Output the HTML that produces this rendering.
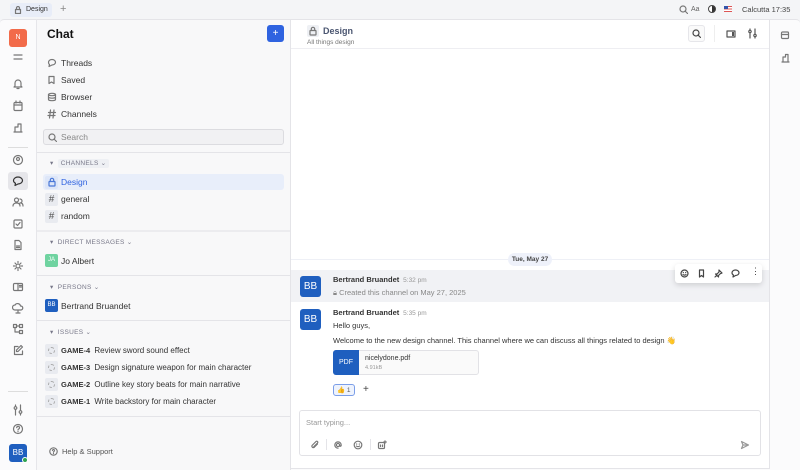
<!DOCTYPE html>
<html><head><meta charset="utf-8"><style>
*{box-sizing:border-box;margin:0;padding:0}
body{width:800px;height:470px;overflow:hidden;background:#f4f5f7;font-family:"Liberation Sans",sans-serif;color:#333;position:relative;font-size:8px}
.a{position:absolute}
svg{position:absolute;fill:none;stroke:#777;stroke-width:1.2;stroke-linecap:round;stroke-linejoin:round}
.it{position:absolute;left:47px;font-size:8.5px;color:#333}
.hd{position:absolute;left:50px;font-size:6.5px;color:#778;letter-spacing:.3px}
.div{position:absolute;left:37px;width:253px;height:1px;background:#e4e4e8}
.sq{position:absolute;left:45px;width:13px;height:13px;background:#e9ebf0;border-radius:2px}
.iss{position:absolute;left:61px;font-size:8px;color:#333}
.iss b{font-size:7.5px;color:#333;margin-right:2px}
</style></head><body>
<div class="a" style="left:10px;top:3px;width:42px;height:14px;background:#e8edf8;border-radius:3px;font-size:7px;padding:3px 0 0 16px;color:#333">Design</div>
<svg style="left:14px;top:6px" width="8" height="8" viewBox="0 0 8 8"><rect x="1.5" y="3.5" width="5" height="4"/><path d="M2.5 3.5V2a1.5 1.5 0 013 0v1.5"/></svg>
<div class="a" style="left:60px;top:3px;font-size:11px;color:#888">+</div>
<svg style="left:679px;top:5px" width="9" height="9" viewBox="0 0 9 9"><circle cx="4" cy="4" r="3"/><path d="M6 6l2.5 2.5"/></svg>
<div class="a" style="left:691px;top:6px;font-size:7px;color:#666">Aa</div>
<div class="a" style="left:708px;top:5px;width:8px;height:8px;border-radius:50%;border:1px solid #444;background:linear-gradient(90deg,#fff 50%,#333 50%)"></div>
<div class="a" style="left:724px;top:6px;width:8px;height:6px;background:linear-gradient(#d55 0 20%,#fff 20% 40%,#d55 40% 60%,#fff 60% 80%,#d55 80%)"><div style="width:4px;height:3px;background:#35a"></div></div>
<div class="a" style="left:742px;top:5px;font-size:7.5px;color:#444">Calcutta 17:35</div>
<div class="a" style="left:0;top:19px;width:800px;height:451px;background:#fbfbfc;border-top:1px solid #e4e4e8;border-radius:4px 4px 0 0"></div>
<div class="a" style="left:36px;top:19px;width:1px;height:451px;background:#e6e6ea"></div>
<div class="a" style="left:37px;top:20px;width:253px;height:450px;background:#f8f8f9"></div>
<div class="a" style="left:290px;top:20px;width:1px;height:450px;background:#e4e4e8"></div>
<div class="a" style="left:291px;top:20px;width:479px;height:449px;background:#fff;border-right:1px solid #e4e4e8;border-bottom:1px solid #e4e4e8"></div>
<div class="a" style="left:9px;top:29px;width:18px;height:18px;background:#f26b4a;border-radius:3px;color:#fff;font-size:7px;text-align:center;line-height:18px">N</div>
<svg style="left:12px;top:52px" width="12" height="10" viewBox="0 0 12 10"><path d="M2 3h8M2 7h8"/></svg>
<svg style="left:12px;top:78px" width="12" height="12" viewBox="0 0 12 12"><path d="M3 8V5a3 3 0 016 0v3l1 1H2zM5 10.5h2"/></svg>
<svg style="left:12px;top:100px" width="12" height="12" viewBox="0 0 12 12"><rect x="2" y="2.5" width="8" height="8" rx="1"/><path d="M2 5h8M4 1v2M8 1v2"/></svg>
<svg style="left:12px;top:122px" width="12" height="12" viewBox="0 0 12 12"><path d="M3 10V5h3V2h3v8zM2 10h8"/></svg>
<div class="a" style="left:8px;top:147px;width:20px;height:1px;background:#ddd"></div>
<svg style="left:12px;top:154px" width="12" height="12" viewBox="0 0 12 12"><circle cx="6" cy="6" r="4.5"/><circle cx="6" cy="5" r="1.5"/></svg>
<div class="a" style="left:8px;top:172px;width:20px;height:18px;background:#e6e6ea;border-radius:3px"></div>
<svg style="left:12px;top:175px" width="12" height="12" viewBox="0 0 12 12"><path d="M6 2c2.5 0 4.5 1.6 4.5 3.5S8.5 9 6 9L3 10.5 3.5 8.3C2.2 7.6 1.5 6.6 1.5 5.5 1.5 3.6 3.5 2 6 2z" stroke="#333"/></svg>
<svg style="left:12px;top:196px" width="12" height="12" viewBox="0 0 12 12"><circle cx="4.5" cy="4" r="2"/><path d="M1 10c0-2 1.5-3 3.5-3s3.5 1 3.5 3M8 3a2 2 0 010 4M9 7c1.5.3 2 1.5 2 3"/></svg>
<svg style="left:12px;top:218px" width="12" height="12" viewBox="0 0 12 12"><rect x="2" y="2" width="8" height="8" rx="1"/><path d="M4 6l1.5 1.5L8 4.5"/></svg>
<svg style="left:12px;top:239px" width="12" height="12" viewBox="0 0 12 12"><path d="M3 1.5h4l2 2v7H3zM4.5 7h3M4.5 8.5h3"/></svg>
<svg style="left:12px;top:260px" width="12" height="12" viewBox="0 0 12 12"><circle cx="6" cy="6" r="2"/><path d="M6 1.5v1M6 9.5v1M1.5 6h1M9.5 6h1M3 3l.7.7M8.3 8.3l.7.7M3 9l.7-.7M8.3 3.7L9 3"/></svg>
<svg style="left:12px;top:281px" width="12" height="12" viewBox="0 0 12 12"><rect x="1.5" y="2.5" width="9" height="7" rx="1"/><path d="M6 2.5v7M7.5 4.5h2M7.5 6h2"/></svg>
<svg style="left:12px;top:302px" width="12" height="12" viewBox="0 0 12 12"><path d="M3 8a2.5 2.5 0 010-5 3 3 0 015.5 1A2 2 0 019 8zM6 8v3M4 11h4"/></svg>
<svg style="left:12px;top:323px" width="12" height="12" viewBox="0 0 12 12"><rect x="1.5" y="1.5" width="3" height="3"/><rect x="7.5" y="1.5" width="3" height="3"/><rect x="7.5" y="7.5" width="3" height="3"/><path d="M4.5 3h3M3 4.5V9h4.5"/></svg>
<svg style="left:12px;top:344px" width="12" height="12" viewBox="0 0 12 12"><path d="M6 2.5H2.5v8h8V7M9 1.5l1.5 1.5L6 7.5H4.5V6z"/></svg>
<div class="a" style="left:8px;top:391px;width:20px;height:1px;background:#ddd"></div>
<svg style="left:12px;top:404px" width="12" height="12" viewBox="0 0 12 12"><path d="M3.5 1v10M8.5 1v10"/><circle cx="3.5" cy="4" r="1.3" fill="#fff"/><circle cx="8.5" cy="8" r="1.3" fill="#fff"/></svg>
<svg style="left:12px;top:423px" width="12" height="12" viewBox="0 0 12 12"><circle cx="6" cy="6" r="4.5"/><path d="M4.7 4.7a1.4 1.4 0 112 1.3c-.5.3-.7.5-.7 1M6 8.5v.1"/></svg>
<div class="a" style="left:9px;top:444px;width:18px;height:18px;background:#1f5fbf;border-radius:3px;color:#fff;font-size:8px;text-align:center;line-height:18px">BB</div>
<div class="a" style="left:22px;top:457px;width:6px;height:6px;background:#2ea44f;border-radius:50%;border:1px solid #fff"></div>
<div class="a" style="left:47px;top:27px;font-size:12px;font-weight:bold;color:#111">Chat</div>
<div class="a" style="left:267px;top:25px;width:17px;height:17px;background:#2f63e0;border-radius:3px;color:#fff;text-align:center;font-size:10px;line-height:17px">+</div>
<svg style="left:47px;top:58px" width="10" height="10" viewBox="0 0 10 10"><path d="M5 1.5c2 0 3.5 1.3 3.5 2.8S7 7 5 7L2 8.5l.5-2C1.8 6 1.5 5 1.5 4.3 1.5 2.8 3 1.5 5 1.5z"/></svg>
<div class="it" style="left:61px;top:58px">Threads</div>
<svg style="left:47px;top:75px" width="10" height="10" viewBox="0 0 10 10"><path d="M2 1.5h5v7L4.5 7 2 8.5z"/></svg>
<div class="it" style="left:61px;top:75px">Saved</div>
<svg style="left:47px;top:92px" width="10" height="10" viewBox="0 0 10 10"><ellipse cx="5" cy="2.5" rx="3.5" ry="1.2"/><path d="M1.5 2.5v5c0 .7 1.6 1.2 3.5 1.2S8.5 8.2 8.5 7.5v-5M1.5 5c0 .7 1.6 1.2 3.5 1.2S8.5 5.7 8.5 5"/></svg>
<div class="it" style="left:61px;top:92px">Browser</div>
<svg style="left:47px;top:109px" width="10" height="10" viewBox="0 0 10 10"><path d="M3.5 1l-1 8M7 1l-1 8M1.5 3.5h7M1 6.5h7"/></svg>
<div class="it" style="left:61px;top:109px">Channels</div>
<div class="a" style="left:43px;top:129px;width:241px;height:16px;background:#f1f1f3;border:1px solid #dcdce0;border-radius:3px"></div>
<svg style="left:48px;top:133px" width="9" height="9" viewBox="0 0 9 9"><circle cx="4" cy="4" r="3"/><path d="M6 6l2.5 2.5"/></svg>
<div class="a" style="left:61px;top:132px;font-size:8.5px;color:#888">Search</div>
<div class="div" style="top:152px"></div>
<div class="hd" style="top:159px">▾ &nbsp;<span style="background:#eef0f4;padding:1px 3px;border-radius:2px">CHANNELS ⌄</span></div>
<div class="a" style="left:43px;top:174px;width:241px;height:16px;background:#e8eefa;border-radius:3px"></div>
<div class="sq" style="top:175.5px;background:#dde6f8"></div>
<svg style="left:47px;top:177px" width="10" height="10" viewBox="0 0 10 10"><rect x="2" y="4.5" width="6" height="4.5" rx=".5" stroke="#4a78d8"/><path d="M3.3 4.5V3a1.7 1.7 0 013.4 0v1.5" stroke="#4a78d8"/></svg>
<div class="it" style="left:61px;top:177px;color:#2f63e0">Design</div>
<div class="sq" style="top:192.5px;font-size:10px;text-align:center;line-height:13px;color:#555">#</div>
<div class="it" style="left:61px;top:194px">general</div>
<div class="sq" style="top:209.5px;font-size:10px;text-align:center;line-height:13px;color:#555">#</div>
<div class="it" style="left:61px;top:211px">random</div>
<div class="div" style="top:230px;height:2px;background:#ececef"></div>
<div class="hd" style="top:238px">▾ &nbsp;DIRECT MESSAGES ⌄</div>
<div class="a" style="left:45px;top:254px;width:13px;height:13px;background:#6fd3a0;border-radius:2px;color:#fff;font-size:6px;text-align:center;line-height:13px">JA</div>
<div class="it" style="left:61px;top:256px">Jo Albert</div>
<div class="div" style="top:275px"></div>
<div class="hd" style="top:283px">▾ &nbsp;PERSONS ⌄</div>
<div class="a" style="left:45px;top:299px;width:13px;height:13px;background:#1f5fbf;border-radius:2px;color:#fff;font-size:6px;text-align:center;line-height:13px">BB</div>
<div class="it" style="left:61px;top:301px">Bertrand Bruandet</div>
<div class="div" style="top:320px"></div>
<div class="hd" style="top:328px">▾ &nbsp;ISSUES ⌄</div>
<div class="sq" style="top:344px"></div><div class="a" style="left:48px;top:347px;width:7px;height:7px;border:1px dashed #aaa;border-radius:50%"></div>
<div class="iss" style="top:346px"><b>GAME-4</b> Review sword sound effect</div>
<div class="sq" style="top:361px"></div><div class="a" style="left:48px;top:364px;width:7px;height:7px;border:1px dashed #aaa;border-radius:50%"></div>
<div class="iss" style="top:363px"><b>GAME-3</b> Design signature weapon for main character</div>
<div class="sq" style="top:378px"></div><div class="a" style="left:48px;top:381px;width:7px;height:7px;border:1px dashed #aaa;border-radius:50%"></div>
<div class="iss" style="top:380px"><b>GAME-2</b> Outline key story beats for main narrative</div>
<div class="sq" style="top:395px"></div><div class="a" style="left:48px;top:398px;width:7px;height:7px;border:1px dashed #aaa;border-radius:50%"></div>
<div class="iss" style="top:397px"><b>GAME-1</b> Write backstory for main character</div>
<div class="div" style="top:416px"></div>
<svg style="left:49px;top:447px" width="9" height="9" viewBox="0 0 9 9"><circle cx="4.5" cy="4.5" r="3.7"/><path d="M3.5 3.5a1 1 0 111.5.9c-.4.2-.5.4-.5.8M4.5 6.5v.1"/></svg>
<div class="a" style="left:62px;top:447px;font-size:7.5px;color:#555">Help &amp; Support</div>
<div class="a" style="left:307px;top:25px;width:12px;height:12px;background:#eef0f4;border-radius:2px"></div>
<svg style="left:308px;top:26px" width="10" height="10" viewBox="0 0 10 10"><rect x="2" y="4.5" width="6" height="4.5" rx=".5"/><path d="M3.3 4.5V3a1.7 1.7 0 013.4 0v1.5"/></svg>
<div class="a" style="left:323px;top:26px;font-size:9px;font-weight:bold;color:#4a5570">Design</div>
<div class="a" style="left:307px;top:39px;font-size:6.5px;color:#777">All things design</div>
<div class="a" style="left:688px;top:25px;width:17px;height:17px;border:1px solid #e6e6ea;border-radius:3px;background:#fafafa"></div>
<svg style="left:692px;top:29px" width="9" height="9" viewBox="0 0 9 9"><circle cx="4" cy="4" r="3" stroke="#444"/><path d="M6 6l2.5 2.5" stroke="#444"/></svg>
<div class="a" style="left:714px;top:25px;width:1px;height:17px;background:#eee"></div>
<svg style="left:726px;top:29px" width="10" height="10" viewBox="0 0 10 10"><rect x="1" y="2" width="8" height="6" stroke="#555"/><rect x="6" y="3" width="2" height="4" fill="#555" stroke="none"/></svg>
<svg style="left:747px;top:28px" width="11" height="11" viewBox="0 0 11 11"><path d="M3 1v9M8 1v9" stroke="#555"/><circle cx="3" cy="3.5" r="1.2" fill="#fff" stroke="#555"/><circle cx="8" cy="7.5" r="1.2" fill="#fff" stroke="#555"/></svg>
<div class="a" style="left:291px;top:48px;width:478px;height:1px;background:#eeeef2"></div>
<svg style="left:780px;top:30px" width="10" height="10" viewBox="0 0 10 10"><rect x="1.5" y="2" width="7" height="6.5" rx="1"/><path d="M1.5 4.5h7"/></svg>
<svg style="left:780px;top:53px" width="10" height="10" viewBox="0 0 10 10"><path d="M3 9V4h2.5V1.5H8V9zM2 9h7"/></svg>
<div class="a" style="left:291px;top:259px;width:478px;height:1px;background:#eef0f6"></div>
<div class="a" style="left:508px;top:253px;width:44px;height:13px;background:#eef1fa;border-radius:7px;font-size:6.5px;font-weight:bold;color:#444;text-align:center;line-height:13px">Tue, May 27</div>
<div class="a" style="left:291px;top:270px;width:478px;height:32px;background:#f1f2f5"></div>
<div class="a" style="left:300px;top:276px;width:21px;height:21px;background:#1f5fbf;border-radius:3px;color:#fff;font-size:10px;text-align:center;line-height:21px">BB</div>
<div class="a" style="left:333px;top:275px;font-size:7.5px;font-weight:bold;color:#333">Bertrand Bruandet <span style="font-weight:normal;color:#999;font-size:6.5px">&nbsp;5:32 pm</span></div>
<div class="a" style="left:333px;top:288px;font-size:7.5px;color:#888">🔒︎ Created this channel on May 27, 2025</div>
<div class="a" style="left:675px;top:264px;width:87px;height:19px;background:#fff;border-radius:3px;box-shadow:0 2px 6px rgba(0,0,0,.15)"></div>
<svg style="left:680px;top:269px" width="9" height="9" viewBox="0 0 9 9"><circle cx="4.5" cy="4.5" r="3.5" stroke="#444"/><path d="M3 5.5c.8.8 2.2.8 3 0M3.3 3.5v.1M5.7 3.5v.1" stroke="#444"/></svg>
<svg style="left:697px;top:269px" width="9" height="9" viewBox="0 0 9 9"><path d="M2.5 1h4v7L4.5 6.5 2.5 8z" stroke="#444"/></svg>
<svg style="left:714px;top:269px" width="9" height="9" viewBox="0 0 9 9"><path d="M5 1l3 3-1.5.5-2 2 0 1.5L1.5 5h1.5l2-2zM3 6L1 8" stroke="#444"/></svg>
<svg style="left:731px;top:269px" width="9" height="9" viewBox="0 0 9 9"><path d="M4.5 1c2 0 3.5 1.3 3.5 2.8S6.5 6.5 4.5 6.5L2 8l.4-2C1.5 5.5 1 4.7 1 3.8 1 2.3 2.5 1 4.5 1z" stroke="#444"/></svg>
<div class="a" style="left:751px;top:266px;font-size:9px;color:#444">⋮</div>
<div class="a" style="left:300px;top:309px;width:21px;height:21px;background:#1f5fbf;border-radius:3px;color:#fff;font-size:10px;text-align:center;line-height:21px">BB</div>
<div class="a" style="left:333px;top:308px;font-size:7.5px;font-weight:bold;color:#333">Bertrand Bruandet <span style="font-weight:normal;color:#999;font-size:6.5px">&nbsp;5:35 pm</span></div>
<div class="a" style="left:333px;top:321px;font-size:7.5px;color:#333">Hello guys,</div>
<div class="a" style="left:333px;top:336px;font-size:7.5px;color:#333;white-space:nowrap">Welcome to the new design channel. This channel where we can discuss all things related to design 👋</div>
<div class="a" style="left:333px;top:350px;width:146px;height:25px;border:1px solid #e2e2e6;border-radius:3px;background:#fafafa"></div>
<div class="a" style="left:333px;top:350px;width:26px;height:25px;background:#1f5fbf;border-radius:3px 0 0 3px;color:#fff;font-size:7px;text-align:center;line-height:25px">PDF</div>
<div class="a" style="left:365px;top:355px;font-size:7px;color:#333">nicelydone.pdf</div>
<div class="a" style="left:365px;top:365px;font-size:5.5px;color:#999">4.91kB</div>
<div class="a" style="left:333px;top:384px;width:22px;height:12px;background:#eef3fd;border:1px solid #7b9ee8;border-radius:3px;font-size:6.5px;color:#555;padding:1px 0 0 3px">👍 1</div>
<div class="a" style="left:363px;top:384px;font-size:10px;color:#444">+</div>
<div class="a" style="left:299px;top:410px;width:462px;height:46px;border:1px solid #e2e2e6;border-radius:3px;background:#fff"></div>
<div class="a" style="left:306px;top:418px;font-size:7.5px;color:#999">Start typing...</div>
<svg style="left:310px;top:440px" width="10" height="10" viewBox="0 0 10 10"><path d="M7.5 4L4 7.5a1.5 1.5 0 01-2-2L6 1.5a1 1 0 011.5 1.5L3.8 6.7"/></svg>
<div class="a" style="left:326px;top:439px;width:1px;height:11px;background:#e4e4e8"></div>
<svg style="left:333px;top:440px" width="10" height="10" viewBox="0 0 10 10"><circle cx="5" cy="5" r="1.6"/><path d="M6.6 5v.8c0 .8 1.6.8 1.6-.8A3.2 3.2 0 105 8.2"/></svg>
<svg style="left:353px;top:440px" width="10" height="10" viewBox="0 0 10 10"><circle cx="5" cy="5" r="3.8"/><path d="M3.4 6c.8.8 2.4.8 3.2 0M3.7 4v.1M6.3 4v.1"/></svg>
<div class="a" style="left:370px;top:439px;width:1px;height:11px;background:#e4e4e8"></div>
<svg style="left:377px;top:440px" width="10" height="10" viewBox="0 0 10 10"><rect x="1.5" y="2.5" width="6" height="6" rx="1"/><path d="M3.5 5v1.5M5.5 5v1.5M8 .8v2.5M6.8 2h2.5"/></svg>
<svg style="left:740px;top:440px" width="10" height="10" viewBox="0 0 10 10"><path d="M1.5 1.5l7 3.5-7 3.5 1.5-3.5zM3 5h5.5" stroke="#999"/></svg>
</body></html>
